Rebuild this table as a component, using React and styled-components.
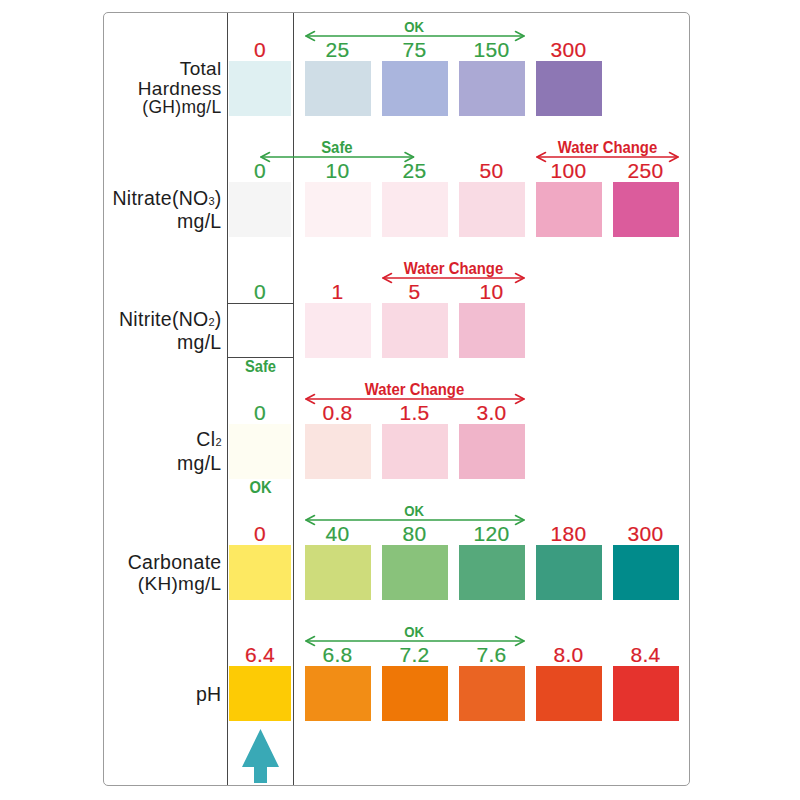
import React from 'react';
import styled, { createGlobalStyle } from 'styled-components';

const GREEN = '#35a047';
const RED = '#d81f2c';
const TEAL = '#39a9b6';
const LINE = '#474747';
const tone = (t) => (t === 'g' ? GREEN : RED);

const Global = createGlobalStyle`
  html, body { margin: 0; padding: 0; background: #fff; }
  body { font-family: 'Liberation Sans', Arial, sans-serif; }
`;

const Page = styled.div`
  padding: 12px 0 0 103px;
`;

const Card = styled.div`
  width: 587px;
  box-sizing: border-box;
  border: 1.5px solid #9c9c9c;
  border-radius: 5px;
  overflow: hidden;
  background: #fff;
`;

const Section = styled.div`
  display: grid;
  grid-template-columns: 122.5px 67px 1fr;
  grid-template-rows: 26px 22px 55px 18px;
`;

const LastSection = styled(Section)`
  grid-template-rows: 26px 22px 55px;
`;

const Footer = styled.div`
  display: grid;
  grid-template-columns: 122.5px 67px 1fr;
  grid-template-rows: 64px;
`;

const Rail = styled.div`
  grid-column: 2;
  grid-row: 1 / -1;
  border-left: 1.5px solid ${LINE};
  border-right: 1.5px solid ${LINE};
`;

const Label = styled.div`
  grid-column: 1;
  grid-row: 3;
  align-self: center;
  justify-self: end;
  padding-right: 5px;
  text-align: right;
  color: #1d1d1d;
  line-height: ${(p) => p.$lh}px;
  letter-spacing: 0.3px;
`;

const LabelLine = styled.div`
  font-size: ${(p) => p.$size || 19.5}px;
  white-space: nowrap;
`;

const Sub = styled.span`
  font-size: 11px;
  letter-spacing: 0;
`;

const RangeBand = styled.div`
  grid-column: 2 / 4;
  grid-row: 1;
  display: flex;
  align-items: flex-start;
  padding-top: 8px;
`;

const Range = styled.div`
  flex: none;
  display: flex;
  flex-direction: column;
  align-items: center;
  width: ${(p) => p.$w}px;
  margin-left: ${(p) => p.$ml}px;
  color: ${(p) => p.$color};
`;

const RangeLabel = styled.div`
  font-size: ${(p) => (p.$small ? 15 : 16)}px;
  font-weight: 700;
  line-height: 12px;
  white-space: nowrap;
  transform: scaleX(${(p) => (p.$small ? 0.88 : 0.93)});
`;

const ArrowSvg = styled.svg`
  display: block;
  margin-top: -2px;
  overflow: visible;
`;

const Number = styled.div`
  font-size: 21px;
  line-height: 22px;
  letter-spacing: 0.3px;
  text-align: center;
  color: ${(p) => p.$color};
  -webkit-text-stroke: 0.2px ${(p) => p.$color};
`;

const StripValue = styled(Number)`
  grid-column: 2;
  grid-row: 2;
`;

const StripSwatch = styled.div`
  grid-column: 2;
  grid-row: 3;
  margin: ${(p) => (p.$boxed ? '0' : '0 2.5px')};
  background: ${(p) => (p.$boxed ? 'transparent' : p.$color)};
  box-sizing: border-box;
  border-top: ${(p) => (p.$boxed ? `1.5px solid ${LINE}` : 'none')};
  border-bottom: ${(p) => (p.$boxed ? `1.5px solid ${LINE}` : 'none')};
`;

const StripNote = styled.div`
  grid-column: 2;
  grid-row: 4;
  text-align: center;
  color: ${GREEN};
  font-size: 16px;
  font-weight: 700;
  line-height: 18px;
  transform: scaleX(0.92);
`;

const ValueRow = styled.div`
  grid-column: 3;
  grid-row: 2;
  display: flex;
  gap: 11px;
  padding-left: 11px;
`;

const ValueCell = styled(Number)`
  width: 66px;
  flex: none;
`;

const SwatchRow = styled.div`
  grid-column: 3;
  grid-row: 3;
  display: flex;
  gap: 11px;
  padding-left: 11px;
`;

const Swatch = styled.div`
  width: 66px;
  height: 55px;
  flex: none;
  background: ${(p) => p.$color};
`;

const ArrowCell = styled.div`
  grid-column: 2;
  grid-row: 1;
  display: flex;
  justify-content: center;
  padding-top: 7.5px;
`;

const L = (i) => 78 + 77 * i;
const R = (i) => L(i) + 66;
const C = (i) => L(i) + 33;
const STRIP_C = 33.5;

const sections = [
  {
    id: 'gh',
    lh: 19.5,
    label: [
      <LabelLine key="a" $size={19}>Total</LabelLine>,
      <LabelLine key="b" $size={19}>Hardness</LabelLine>,
      <LabelLine key="c" $size={17.5}>(GH)mg/L</LabelLine>,
    ],
    strip: { v: '0', t: 'r', color: '#dff0f2' },
    values: [
      ['25', 'g', '#cfdde6'],
      ['75', 'g', '#aab5dd'],
      ['150', 'g', '#aba9d4'],
      ['300', 'r', '#8d77b4'],
    ],
    ranges: [{ text: 'OK', t: 'g', from: L(0), to: R(2), small: true }],
  },
  {
    id: 'no3',
    lh: 20,
    label: [
      <LabelLine key="a">Nitrate(NO<Sub>3</Sub>)</LabelLine>,
      <LabelLine key="b">mg/L</LabelLine>,
    ],
    strip: { v: '0', t: 'g', color: '#f5f5f5' },
    values: [
      ['10', 'g', '#fdf1f3'],
      ['25', 'g', '#fce9ee'],
      ['50', 'r', '#f9dbe4'],
      ['100', 'r', '#f0a8c3'],
      ['250', 'r', '#db5c9c'],
    ],
    ranges: [
      { text: 'Safe', t: 'g', from: STRIP_C, to: C(1) },
      { text: 'Water Change', t: 'r', from: L(3), to: R(4) },
    ],
  },
  {
    id: 'no2',
    lh: 20,
    label: [
      <LabelLine key="a">Nitrite(NO<Sub>2</Sub>)</LabelLine>,
      <LabelLine key="b">mg/L</LabelLine>,
    ],
    strip: { v: '0', t: 'g', color: '#fff', boxed: true },
    note: 'Safe',
    values: [
      ['1', 'r', '#fce8ee'],
      ['5', 'r', '#f9d9e3'],
      ['10', 'r', '#f2bdd1'],
    ],
    ranges: [{ text: 'Water Change', t: 'r', from: L(1), to: R(2) }],
  },
  {
    id: 'cl2',
    lh: 21,
    label: [
      <LabelLine key="a">Cl<Sub>2</Sub></LabelLine>,
      <LabelLine key="b">mg/L</LabelLine>,
    ],
    strip: { v: '0', t: 'g', color: '#fefdf2' },
    note: 'OK',
    values: [
      ['0.8', 'r', '#fae4e0'],
      ['1.5', 'r', '#f8d3dd'],
      ['3.0', 'r', '#f0b4c9'],
    ],
    ranges: [{ text: 'Water Change', t: 'r', from: L(0), to: R(2) }],
  },
  {
    id: 'kh',
    lh: 22,
    label: [
      <LabelLine key="a">Carbonate</LabelLine>,
      <LabelLine key="b" $size={19}>(KH)mg/L</LabelLine>,
    ],
    strip: { v: '0', t: 'r', color: '#fde962' },
    values: [
      ['40', 'g', '#cedc7b'],
      ['80', 'g', '#89c27b'],
      ['120', 'g', '#56a97b'],
      ['180', 'r', '#3b9c80'],
      ['300', 'r', '#018b8b'],
    ],
    ranges: [{ text: 'OK', t: 'g', from: L(0), to: R(2), small: true }],
  },
  {
    id: 'ph',
    lh: 20,
    label: [<LabelLine key="a">pH</LabelLine>],
    strip: { v: '6.4', t: 'r', color: '#fdcb05' },
    values: [
      ['6.8', 'g', '#f28d15'],
      ['7.2', 'g', '#ef7706'],
      ['7.6', 'g', '#ea6423'],
      ['8.0', 'r', '#e74a1f'],
      ['8.4', 'r', '#e5332d'],
    ],
    ranges: [{ text: 'OK', t: 'g', from: L(0), to: R(2), small: true }],
    last: true,
  },
];

function RangeArrow({ w, color }) {
  return (
    <ArrowSvg width={w} height={10} viewBox={`0 0 ${w} 10`}>
      <g fill="none" stroke={color} strokeWidth="1.6" strokeLinecap="round" strokeLinejoin="round">
        <line x1="1" y1="5" x2={w - 1} y2="5" />
        <polyline points="9.5,0.5 1,5 9.5,9.5" />
        <polyline points={`${w - 9.5},0.5 ${w - 1},5 ${w - 9.5},9.5`} />
      </g>
    </ArrowSvg>
  );
}

function Ranges({ ranges }) {
  let prev = 0;
  return (
    <RangeBand>
      {ranges.map((r) => {
        const ml = r.from - prev;
        prev = r.to;
        const color = tone(r.t);
        return (
          <Range key={r.text + r.from} $w={r.to - r.from} $ml={ml} $color={color}>
            <RangeLabel $small={r.small}>{r.text}</RangeLabel>
            <RangeArrow w={r.to - r.from} color={color} />
          </Range>
        );
      })}
    </RangeBand>
  );
}

function Row({ s }) {
  const Wrap = s.last ? LastSection : Section;
  return (
    <Wrap>
      <Rail />
      <Ranges ranges={s.ranges} />
      <Label $lh={s.lh}>{s.label}</Label>
      <StripValue $color={tone(s.strip.t)}>{s.strip.v}</StripValue>
      <StripSwatch $color={s.strip.color} $boxed={s.strip.boxed} />
      {s.note && <StripNote>{s.note}</StripNote>}
      <ValueRow>
        {s.values.map(([v, t]) => (
          <ValueCell key={v} $color={tone(t)}>{v}</ValueCell>
        ))}
      </ValueRow>
      <SwatchRow>
        {s.values.map(([v, , c]) => (
          <Swatch key={v} $color={c} />
        ))}
      </SwatchRow>
    </Wrap>
  );
}

export default function App() {
  return (
    <>
      <Global />
      <Page>
        <Card>
          {sections.map((s) => (
            <Row key={s.id} s={s} />
          ))}
          <Footer>
            <Rail />
            <ArrowCell>
              <svg width="37" height="54" viewBox="0 0 37 54">
                <polygon points="18.5,0 37,38 25,38 25,54 12,54 12,38 0,38" fill={TEAL} />
              </svg>
            </ArrowCell>
          </Footer>
        </Card>
      </Page>
    </>
  );
}
